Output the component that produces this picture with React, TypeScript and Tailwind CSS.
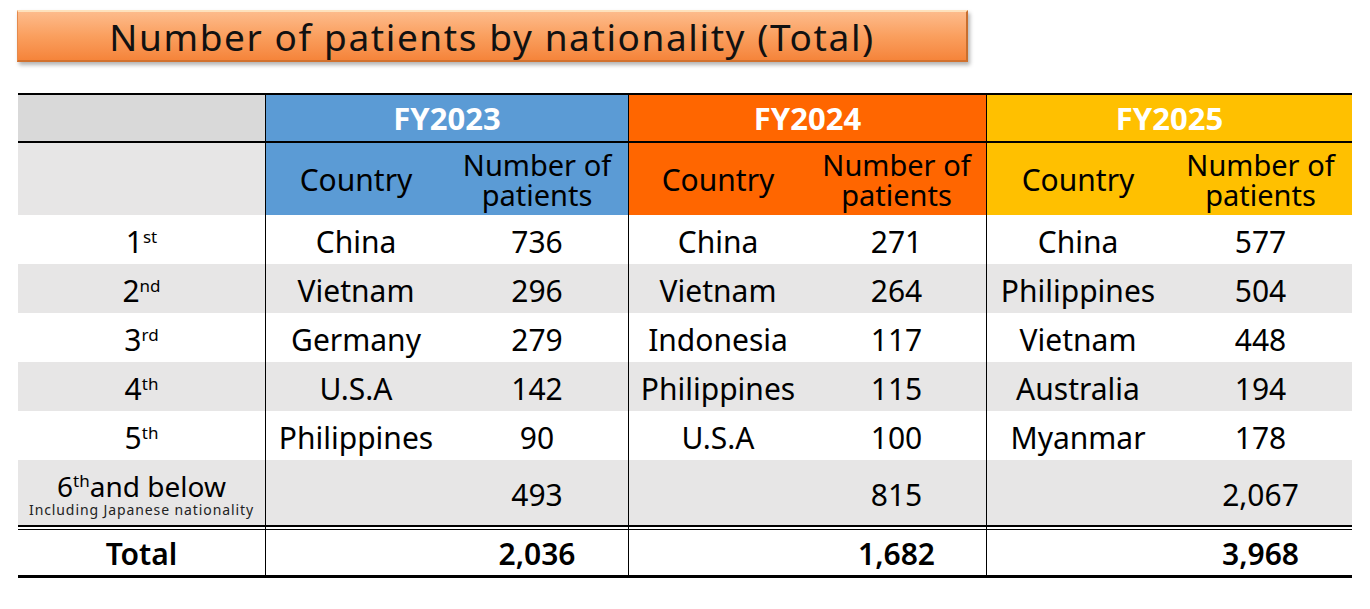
import React from "react";

type Entry = { country: string; count: string };

const grid = "grid grid-cols-[247px_181px_182px_179px_179px_183px_183px]";

const ranks: [string, string][] = [
  ["1", "st"],
  ["2", "nd"],
  ["3", "rd"],
  ["4", "th"],
  ["5", "th"],
];

const rows: Entry[][] = [
  [
    { country: "China", count: "736" },
    { country: "China", count: "271" },
    { country: "China", count: "577" },
  ],
  [
    { country: "Vietnam", count: "296" },
    { country: "Vietnam", count: "264" },
    { country: "Philippines", count: "504" },
  ],
  [
    { country: "Germany", count: "279" },
    { country: "Indonesia", count: "117" },
    { country: "Vietnam", count: "448" },
  ],
  [
    { country: "U.S.A", count: "142" },
    { country: "Philippines", count: "115" },
    { country: "Australia", count: "194" },
  ],
  [
    { country: "Philippines", count: "90" },
    { country: "U.S.A", count: "100" },
    { country: "Myanmar", count: "178" },
  ],
];

const others = ["493", "815", "2,067"];
const totals = ["2,036", "1,682", "3,968"];

const years = [
  { label: "FY2023", bg: "bg-[#5b9bd5]" },
  { label: "FY2024", bg: "bg-[#ff6600]" },
  { label: "FY2025", bg: "bg-[#ffc000]" },
];

const cell = "flex items-center justify-center";

const Sup = ({ children }: { children: React.ReactNode }) => (
  <sup className="text-[17px] relative -top-[10px]">{children}</sup>
);

export default function App() {
  return (
    <div
      className="w-[1370px] h-[609px] bg-white overflow-hidden text-black"
      style={{ fontFamily: '"Noto Sans", "Noto Sans CJK JP", sans-serif' }}
    >
      {/* Title */}
      <div className="pt-[10px] pl-[17px]">
        <div className="w-[951px] h-[52px] flex items-center justify-center bg-linear-to-b from-[#fdbb8b] via-[#fa9f5e] to-[#f5843a] border-t-2 border-t-[#fee2bd] border-b-2 border-b-[#d2712e] border-l border-l-[#e58a4c] border-r-2 border-r-[#c86e2e] shadow-[2px_3px_4px_rgba(0,0,0,0.3)]">
          <span className="text-[37px] tracking-[1.6px] leading-none text-[#111] pt-[1px]">
            Number of patients by nationality (Total)
          </span>
        </div>
      </div>

      {/* Table */}
      <div className="ml-[18px] mt-[31px] w-[1334px] text-[30px] leading-none">
        <div className="h-[2px] bg-black" />

        {/* Year headers */}
        <div className={`${grid} h-[46px]`}>
          <div className="bg-[#d9d9d9]" />
          {years.map((y) => (
            <div
              key={y.label}
              className={`${cell} col-span-2 border-l border-black ${y.bg} text-white font-bold text-[31px] pt-[1px]`}
            >
              {y.label}
            </div>
          ))}
        </div>
        <div className="h-[2px] bg-black" />

        {/* Sub headers */}
        <div className={`${grid} h-[72px]`}>
          <div className="bg-[#e7e6e6]" />
          {years.map((y) => (
            <React.Fragment key={y.label}>
              <div className={`${cell} border-l border-black ${y.bg} pt-[2px]`}>Country</div>
              <div className={`${cell} flex-col ${y.bg} text-[29px] leading-[30px] pt-[2px]`}>
                <span>Number of</span>
                <span>patients</span>
              </div>
            </React.Fragment>
          ))}
        </div>

        {/* Ranked rows */}
        {rows.map((r, i) => (
          <div key={i} className={`${grid} h-[49px] ${i % 2 === 1 ? "bg-[#e7e6e6]" : "bg-white"}`}>
            <div className={`${cell} pt-[4px]`}>
              <span>
                {ranks[i][0]}
                <Sup>{ranks[i][1]}</Sup>
              </span>
            </div>
            {r.map((e, j) => (
              <React.Fragment key={j}>
                <div className={`${cell} border-l border-black pt-[4px]`}>{e.country}</div>
                <div className={`${cell} pt-[4px]`}>{e.count}</div>
              </React.Fragment>
            ))}
          </div>
        ))}

        {/* 6th and below */}
        <div className={`${grid} h-[65px] bg-[#e7e6e6]`}>
          <div className={`${cell} flex-col pt-[4px]`}>
            <span className="text-[28px] leading-[30px]">
              6<Sup>th</Sup>and below
            </span>
            <span className="text-[14px] tracking-[0.9px] leading-[18px] text-[#222]">
              Including Japanese nationality
            </span>
          </div>
          {others.map((n, j) => (
            <React.Fragment key={j}>
              <div className="border-l border-black" />
              <div className={`${cell} pt-[4px]`}>{n}</div>
            </React.Fragment>
          ))}
        </div>

        {/* Double rule */}
        <div className="h-[2px] bg-black" />
        <div className={`${grid} h-[2px]`}>
          <div />
          <div className="border-l border-black col-span-2" />
          <div className="border-l border-black col-span-2" />
          <div className="border-l border-black col-span-2" />
        </div>
        <div className="h-[1px] bg-black" />

        {/* Total */}
        <div className={`${grid} h-[45px] font-semibold`}>
          <div className={`${cell} pt-[3px]`}>Total</div>
          {totals.map((n, j) => (
            <React.Fragment key={j}>
              <div className="border-l border-black" />
              <div className={`${cell} pt-[3px]`}>{n}</div>
            </React.Fragment>
          ))}
        </div>
        <div className="h-[3px] bg-black" />
      </div>
    </div>
  );
}
